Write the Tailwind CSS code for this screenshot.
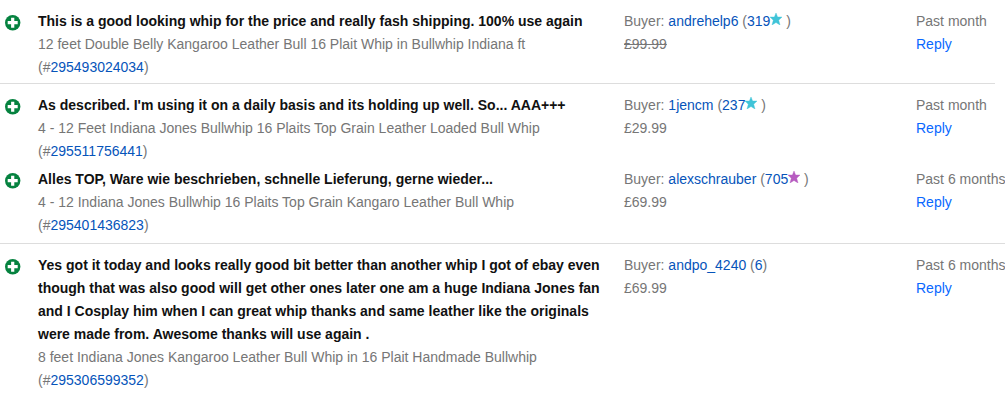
<!DOCTYPE html>
<html lang="en">
<head>
  <meta charset="UTF-8" />
  <meta name="viewport" content="width=device-width, initial-scale=1.0" />
  <title>Feedback</title>
  <script src="https://cdn.jsdelivr.net/npm/@tailwindcss/browser@4"></script>
</head>
<body class="bg-white font-['Liberation_Sans',Arial,sans-serif] text-sm leading-[23px] text-[#767676]">
  <svg class="hidden">
    <symbol id="plus" viewBox="0 0 16 16">
      <circle cx="7.7" cy="7.7" r="7.7" fill="#05823f" />
      <path d="M7.7 2.7v10M2.7 7.7h10" stroke="#fff" stroke-width="3.2" />
    </symbol>
    <symbol id="star" viewBox="0 0 12 12">
      <path d="M6 0l1.6 4H12L8.7 7.2 10 12 6 9.5 2 12l1.3-4.8L0 4h4.4z" fill="currentColor" stroke="currentColor" stroke-width=".4" />
    </symbol>
  </svg>

  <!-- Past month, first entry -->
  <div class="mr-[10px] border-b border-[#dddddd] pt-[10px] pb-1">
    <table class="w-full table-fixed">
      <colgroup><col class="w-[38px]" /><col /><col class="w-[292px]" /><col class="w-[79px]" /></colgroup>
      <tbody class="align-top">
        <tr>
          <td class="pt-[5px] pl-[5px]"><svg class="size-4" role="img" aria-label="Positive feedback"><use href="#plus" /></svg></td>
          <td class="pr-5">
            <p class="font-bold text-[#111111]">This is a good looking whip for the price and really fash shipping. 100% use again</p>
            <p>12 feet Double Belly Kangaroo Leather Bull 16 Plait Whip in Bullwhip Indiana ft<br />(#<a href="#" class="text-[#0654ba]">295493024034</a>)</p>
          </td>
          <td>
            <p>Buyer: <a href="#" class="text-[#0654ba]">andrehelp6</a> (<a href="#" class="text-[#0654ba]">319<svg class="inline size-3 align-[1px] text-[#40c4d8]"><use href="#star" /></svg></a> )</p>
            <p class="line-through">£99.99</p>
          </td>
          <td class="whitespace-nowrap">
            <p>Past month</p>
            <a href="#" class="text-[#0968ff]">Reply</a>
          </td>
        </tr>
      </tbody>
    </table>
  </div>

  <div class="border-b border-[#dddddd] pt-[10px] pb-[6px]">
    <table class="w-full table-fixed">
      <colgroup><col class="w-[38px]" /><col /><col class="w-[292px]" /><col class="w-[89px]" /></colgroup>
      <tbody class="align-top">
        <tr>
          <td class="pt-[5px] pl-[5px]"><svg class="size-4" role="img" aria-label="Positive feedback"><use href="#plus" /></svg></td>
          <td class="pr-5 pb-[5px]">
            <p class="font-bold text-[#111111]">As described. I'm using it on a daily basis and its holding up well. So... AAA+++</p>
            <p>4 - 12 Feet Indiana Jones Bullwhip 16 Plaits Top Grain Leather Loaded Bull Whip<br />(#<a href="#" class="text-[#0654ba]">295511756441</a>)</p>
          </td>
          <td>
            <p>Buyer: <a href="#" class="text-[#0654ba]">1jencm</a> (<a href="#" class="text-[#0654ba]">237<svg class="inline size-3 align-[1px] text-[#40c4d8]"><use href="#star" /></svg></a> )</p>
            <p>£29.99</p>
          </td>
          <td class="whitespace-nowrap">
            <p>Past month</p>
            <a href="#" class="text-[#0968ff]">Reply</a>
          </td>
        </tr>
        <tr>
          <td class="pt-[5px] pl-[5px]"><svg class="size-4" role="img" aria-label="Positive feedback"><use href="#plus" /></svg></td>
          <td class="pr-5">
            <p class="font-bold text-[#111111]">Alles TOP, Ware wie beschrieben, schnelle Lieferung, gerne wieder...</p>
            <p>4 - 12 Indiana Jones Bullwhip 16 Plaits Top Grain Kangaro Leather Bull Whip<br />(#<a href="#" class="text-[#0654ba]">295401436823</a>)</p>
          </td>
          <td>
            <p>Buyer: <a href="#" class="text-[#0654ba]">alexschrauber</a> (<a href="#" class="text-[#0654ba]">705<svg class="inline size-3 align-[1px] text-[#b75cc0]"><use href="#star" /></svg></a> )</p>
            <p>£69.99</p>
          </td>
          <td class="whitespace-nowrap">
            <p>Past 6 months</p>
            <a href="#" class="text-[#0968ff]">Reply</a>
          </td>
        </tr>
      </tbody>
    </table>
  </div>

  <div class="pt-[10px]">
    <table class="w-full table-fixed">
      <colgroup><col class="w-[38px]" /><col /><col class="w-[292px]" /><col class="w-[89px]" /></colgroup>
      <tbody class="align-top">
        <tr>
          <td class="pt-[5px] pl-[5px]"><svg class="size-4" role="img" aria-label="Positive feedback"><use href="#plus" /></svg></td>
          <td class="pr-5">
            <p class="font-bold text-[#111111]">Yes got it today and looks really good bit better than another whip I got of ebay even though that was also good will get other ones later one am a huge Indiana Jones fan and I Cosplay him when I can great whip thanks and same leather like the originals were made from. Awesome thanks will use again .</p>
            <p>8 feet Indiana Jones Kangaroo Leather Bull Whip in 16 Plait Handmade Bullwhip<br />(#<a href="#" class="text-[#0654ba]">295306599352</a>)</p>
          </td>
          <td>
            <p>Buyer: <a href="#" class="text-[#0654ba]">andpo_4240</a> (<a href="#" class="text-[#0654ba]">6</a>)</p>
            <p>£69.99</p>
          </td>
          <td class="whitespace-nowrap">
            <p>Past 6 months</p>
            <a href="#" class="text-[#0968ff]">Reply</a>
          </td>
        </tr>
      </tbody>
    </table>
  </div>
</body>
</html>
